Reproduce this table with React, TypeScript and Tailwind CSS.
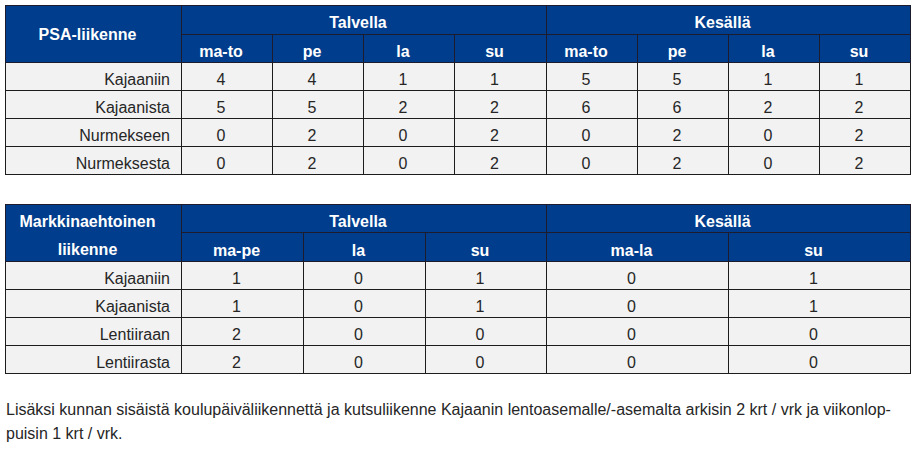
import React from "react";

const psaRows = [
  ["Kajaaniin", 4, 4, 1, 1, 5, 5, 1, 1],
  ["Kajaanista", 5, 5, 2, 2, 6, 6, 2, 2],
  ["Nurmekseen", 0, 2, 0, 2, 0, 2, 0, 2],
  ["Nurmeksesta", 0, 2, 0, 2, 0, 2, 0, 2],
];

const markRows = [
  ["Kajaaniin", 1, 0, 1, 0, 1],
  ["Kajaanista", 1, 0, 1, 0, 1],
  ["Lentiiraan", 2, 0, 0, 0, 0],
  ["Lentiirasta", 2, 0, 0, 0, 0],
];

const thBase =
  "border border-[#1c1c2c] bg-[#003D8C] text-white font-bold text-[16px] leading-[18px] text-center p-0 pr-3";
const td =
  "border border-[#1c1c1c] bg-[#F2F2F2] text-[#262626] text-[16px] leading-[18px] text-center p-0 pr-3 pb-[1px] align-bottom";
const tdFirst =
  "border border-[#1c1c1c] bg-[#F2F2F2] text-[#262626] text-[16px] leading-[18px] text-right p-0 pr-[11px] pb-[1px] align-bottom";

export default function App() {
  return (
    <div
      className="w-[916px] h-[451px] bg-white pt-[5px] pl-[5px] overflow-hidden"
      style={{ fontFamily: '"Liberation Sans", Arial, sans-serif' }}
    >
      <table className="border-collapse w-[905px] table-fixed">
        <colgroup>
          <col className="w-[176px]" />
          <col className="w-[91px]" />
          <col className="w-[91px]" />
          <col className="w-[91px]" />
          <col className="w-[92px]" />
          <col className="w-[91px]" />
          <col className="w-[91px]" />
          <col className="w-[91px]" />
          <col className="w-[91px]" />
        </colgroup>
        <thead>
          <tr className="h-[29px]">
            <th rowSpan={2} className={thBase + " align-middle pt-[2px]"}>
              PSA-liikenne
            </th>
            <th colSpan={4} className={thBase + " align-bottom pb-[2px]"}>
              Talvella
            </th>
            <th colSpan={4} className={thBase + " align-bottom pb-[2px]"}>
              Kesällä
            </th>
          </tr>
          <tr className="h-[28px]">
            {["ma-to", "pe", "la", "su", "ma-to", "pe", "la", "su"].map((h, i) => (
              <th key={i} className={thBase + " align-bottom pb-[1px]"}>
                {h}
              </th>
            ))}
          </tr>
        </thead>
        <tbody>
          {psaRows.map((r, i) => (
            <tr key={i} className="h-[28px]">
              {r.map((c, j) => (
                <td key={j} className={j === 0 ? tdFirst : td}>
                  {c}
                </td>
              ))}
            </tr>
          ))}
        </tbody>
      </table>

      <table className="border-collapse w-[905px] table-fixed mt-[29px]">
        <colgroup>
          <col className="w-[176px]" />
          <col className="w-[122px]" />
          <col className="w-[122px]" />
          <col className="w-[121px]" />
          <col className="w-[182px]" />
          <col className="w-[182px]" />
        </colgroup>
        <thead>
          <tr className="h-[28px]">
            <th rowSpan={2} className={thBase + " align-middle"}>
              <div className="h-[28px] flex items-end justify-center pb-[2px]">Markkinaehtoinen</div>
              <div className="h-[28px] flex items-end justify-center pb-[2px]">liikenne</div>
            </th>
            <th colSpan={3} className={thBase + " align-bottom pb-[1px]"}>
              Talvella
            </th>
            <th colSpan={2} className={thBase + " align-bottom pb-[1px]"}>
              Kesällä
            </th>
          </tr>
          <tr className="h-[29px]">
            {["ma-pe", "la", "su", "ma-la", "su"].map((h, i) => (
              <th key={i} className={thBase + " align-bottom pb-[1px]"}>
                {h}
              </th>
            ))}
          </tr>
        </thead>
        <tbody>
          {markRows.map((r, i) => (
            <tr key={i} className="h-[28px]">
              {r.map((c, j) => (
                <td key={j} className={j === 0 ? tdFirst : td}>
                  {c}
                </td>
              ))}
            </tr>
          ))}
        </tbody>
      </table>

      <p className="mt-[24px] text-[16px] leading-[24px] text-[#262626] pl-[1px] w-[905px]">
        Lisäksi kunnan sisäistä koulupäiväliikennettä ja kutsuliikenne Kajaanin lentoasemalle/-asemalta arkisin 2 krt / vrk ja viikonlop-
        <br />
        puisin 1 krt / vrk.
      </p>
    </div>
  );
}
